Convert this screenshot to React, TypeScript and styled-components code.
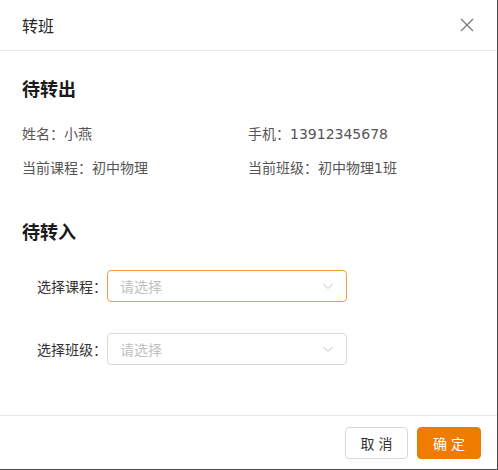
import React from 'react';
import styled, { createGlobalStyle } from 'styled-components';

const GlobalStyle = createGlobalStyle`
  html, body {
    margin: 0;
    padding: 0;
    background: #4b4b4b;
  }
  body {
    font-family: "Liberation Sans", "Noto Sans CJK SC", sans-serif;
  }
`;

const Modal = styled.div`
  width: 497px;
  height: 469px;
  background: #fff;
  display: flex;
  flex-direction: column;
`;

const Header = styled.div`
  height: 51px;
  box-sizing: border-box;
  padding: 0 22px;
  display: flex;
  align-items: center;
  justify-content: space-between;
  border-bottom: 1px solid #e8e8e8;
`;

const HeaderTitle = styled.div`
  font-size: 16px;
  color: #262626;
`;

const CloseButton = styled.button`
  border: none;
  background: none;
  padding: 0;
  width: 16px;
  height: 16px;
  display: flex;
  align-items: center;
  justify-content: center;
  cursor: pointer;
`;

const Body = styled.div`
  flex: 1;
  padding: 26px 22px 0;
`;

const SectionTitle = styled.div`
  font-size: 18px;
  font-weight: 700;
  color: #1a1a1a;
  line-height: 26px;
`;

const InfoGrid = styled.div`
  display: grid;
  grid-template-columns: 226px 1fr;
  row-gap: 13px;
  margin-top: 21px;
  font-family: "DejaVu Sans", "Noto Sans CJK SC", sans-serif;
  font-size: 14px;
  line-height: 21px;
  color: #555;
`;

const TransferTitle = styled(SectionTitle)`
  margin-top: 41px;
`;

const Form = styled.div`
  display: flex;
  flex-direction: column;
  gap: 31px;
  margin-top: 24px;
`;

const FormRow = styled.div`
  display: flex;
  align-items: center;
`;

const Label = styled.div`
  width: 85px;
  text-align: right;
  font-size: 14px;
  color: #333;
`;

const Select = styled.div<{ $active?: boolean }>`
  width: 240px;
  height: 32px;
  box-sizing: border-box;
  border: 1px solid ${(p) => (p.$active ? '#f29b3f' : '#d9d9d9')};
  border-radius: 4px;
  display: flex;
  align-items: center;
  justify-content: space-between;
  padding: 0 12px;
  font-size: 14px;
  color: #bfbfbf;
`;

const Footer = styled.div`
  height: 54px;
  box-sizing: border-box;
  border-top: 1px solid #e8e8e8;
  display: flex;
  align-items: center;
  justify-content: flex-end;
  gap: 9px;
  padding: 0 16px 0 0;
`;

const Button = styled.button<{ $primary?: boolean }>`
  height: 32px;
  width: ${(p) => (p.$primary ? '64px' : '63px')};
  border-radius: 4px;
  font-family: inherit;
  font-size: 14px;
  letter-spacing: 4px;
  text-indent: 4px;
  cursor: pointer;
  border: 1px solid ${(p) => (p.$primary ? '#ef7b00' : '#d9d9d9')};
  background: ${(p) => (p.$primary ? '#ef7b00' : '#fff')};
  color: ${(p) => (p.$primary ? '#fff' : '#333')};
`;

const Chevron = () => (
  <svg width="12" height="12" viewBox="0 0 12 12" fill="none">
    <path d="M1.5 4 L6 8.5 L10.5 4" stroke="#c0c0c0" strokeWidth="1" />
  </svg>
);

export default function App() {
  return (
    <>
      <GlobalStyle />
      <Modal>
        <Header>
          <HeaderTitle>转班</HeaderTitle>
          <CloseButton>
            <svg width="14" height="14" viewBox="0 0 14 14">
              <path d="M1 1 L13 13 M13 1 L1 13" stroke="#777" strokeWidth="1.2" />
            </svg>
          </CloseButton>
        </Header>
        <Body>
          <SectionTitle>待转出</SectionTitle>
          <InfoGrid>
            <div>姓名：小燕</div>
            <div>手机：13912345678</div>
            <div>当前课程：初中物理</div>
            <div>当前班级：初中物理1班</div>
          </InfoGrid>
          <TransferTitle>待转入</TransferTitle>
          <Form>
            <FormRow>
              <Label>选择课程：</Label>
              <Select $active>
                请选择
                <Chevron />
              </Select>
            </FormRow>
            <FormRow>
              <Label>选择班级：</Label>
              <Select>
                请选择
                <Chevron />
              </Select>
            </FormRow>
          </Form>
        </Body>
        <Footer>
          <Button>取消</Button>
          <Button $primary>确定</Button>
        </Footer>
      </Modal>
    </>
  );
}
